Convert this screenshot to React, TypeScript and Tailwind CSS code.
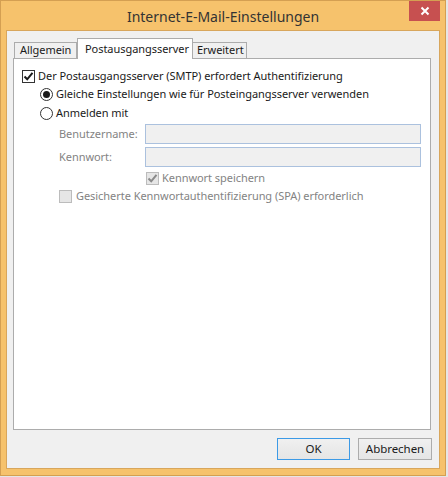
import React from 'react'

const font = { fontFamily: '"Noto Sans", "Open Sans", sans-serif' }

function Check({ disabled }: { disabled?: boolean }) {
  return (
    <svg width="11" height="11" viewBox="0 0 11 11" className="block">
      <path
        d="M1.5 5.5 L4.2 8.3 L9.5 1.8"
        fill="none"
        stroke={disabled ? '#8a8a8a' : '#1a1a1a'}
        strokeWidth="2"
      />
    </svg>
  )
}

function CheckBox({ checked, disabled }: { checked?: boolean; disabled?: boolean }) {
  return (
    <div
      className={
        'w-[13px] h-[13px] shrink-0 flex items-center justify-center border ' +
        (disabled ? 'bg-[#e6e6e6] border-[#bcbcbc]' : 'bg-white border-[#333333]')
      }
    >
      {checked && <Check disabled={disabled} />}
    </div>
  )
}

function Radio({ checked }: { checked?: boolean }) {
  return (
    <div className="w-[13px] h-[13px] shrink-0 rounded-full border border-[#333333] bg-white flex items-center justify-center">
      {checked && <div className="w-[7px] h-[7px] rounded-full bg-[#1a1a1a]" />}
    </div>
  )
}

export default function App() {
  return (
    <div className="w-[448px] h-[477px] bg-[#e6e6e6] text-[11px] tracking-[-0.05px] text-[#1a1a1a]" style={font}>
      {/* window frame */}
      <div className="w-[446px] h-[476px] border border-[#d49f52] bg-[#f6c26c] flex flex-col">
        <div className="relative h-[29px] flex items-center justify-center">
          <span className="text-[14px] tracking-normal text-[#333333] mt-[2px]">Internet-E-Mail-Einstellungen</span>
          <div className="absolute top-0 right-[5px] w-[31px] h-[20px] bg-[#c75050] flex items-center justify-center">
            <svg width="10" height="10" viewBox="0 0 10 10">
              <path d="M1.5 1.5 L8.5 8.5 M8.5 1.5 L1.5 8.5" stroke="#ffffff" strokeWidth="2" />
            </svg>
          </div>
        </div>

        {/* client area */}
        <div className="ml-[5px] w-[434px] h-[439px] border border-[#d8a65c] bg-[#f0f0f0] flex flex-col">
          <div className="pt-[7px] pl-[6px] pr-[7px]">
            {/* tabs */}
            <div className="flex items-end h-[20px] pl-[1px]">
              <div className="h-[16px] w-[63px] border border-b-0 border-[#acacac] bg-[#f0f0f0] flex items-center pl-[5px]">
                Allgemein
              </div>
              <div className="relative z-10 h-[21px] w-[116px] border border-b-0 border-[#acacac] bg-white flex items-center pl-[7px] -mb-[1px]">
                Postausgangsserver
              </div>
              <div className="h-[16px] w-[54px] border border-b-0 border-l-0 border-[#acacac] bg-[#f0f0f0] flex items-center pl-[4px]">
                Erweitert
              </div>
            </div>

            {/* panel */}
            <div className="h-[372px] w-[418px] border border-[#acacac] bg-white flex flex-col pt-[8px]">
              <div className="h-[18px] flex items-center pl-[8px]">
                <CheckBox checked />
                <span className="ml-[3px]">Der Postausgangsserver (SMTP) erfordert Authentifizierung</span>
              </div>
              <div className="h-[18px] flex items-center pl-[26px]">
                <Radio checked />
                <span className="ml-[3px]">Gleiche Einstellungen wie für Posteingangsserver verwenden</span>
              </div>
              <div className="h-[18px] mt-[1px] flex items-center pl-[26px]">
                <Radio />
                <span className="ml-[3px]">Anmelden mit</span>
              </div>
              <div className="mt-[2px] flex items-center pl-[45px] text-[#838383]">
                <span className="w-[86px]">Benutzername:</span>
                <div className="w-[276px] h-[20px] border border-[#abc1de] bg-[#f0f0f0]" />
              </div>
              <div className="mt-[3px] flex items-center pl-[45px] text-[#838383]">
                <span className="w-[86px]">Kennwort:</span>
                <div className="w-[276px] h-[20px] border border-[#abc1de] bg-[#f0f0f0]" />
              </div>
              <div className="h-[18px] mt-[2px] flex items-center pl-[132px] text-[#838383]">
                <CheckBox checked disabled />
                <span className="ml-[3px]">Kennwort speichern</span>
              </div>
              <div className="h-[18px] flex items-center pl-[45px] text-[#838383]">
                <CheckBox disabled />
                <span className="ml-[4px]">Gesicherte Kennwortauthentifizierung (SPA) erforderlich</span>
              </div>
            </div>
          </div>

          {/* buttons */}
          <div className="flex justify-end gap-[8px] pr-[7px] mt-[8px]">
            <button className="w-[73px] h-[22px] border border-[#3c9ae6] bg-gradient-to-b from-[#f0f0f0] to-[#e5e5e5] text-[11.5px]">
              OK
            </button>
            <button className="w-[74px] h-[22px] border border-[#acacac] bg-gradient-to-b from-[#f0f0f0] to-[#e5e5e5] text-[11.5px]">
              Abbrechen
            </button>
          </div>
        </div>
      </div>
    </div>
  )
}
